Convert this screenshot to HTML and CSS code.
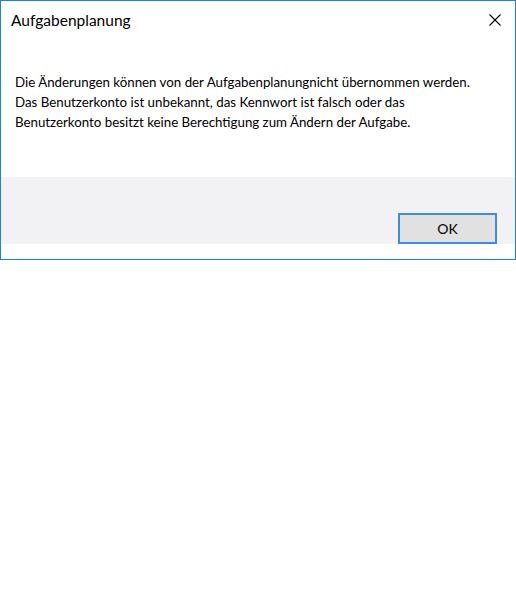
FILE: index.html
```html
<!DOCTYPE html>
<html lang="de">
<head>
<meta charset="utf-8">
<link rel="stylesheet" href="styles.css">
</head>
<body>
<div class="window">
  <div class="titlebar">
    <span class="title">Aufgabenplanung</span>
    <span class="close">
      <svg width="12" height="12" viewBox="0 0 12 12"><path d="M0.5 0.5 L11.5 11.5 M11.5 0.5 L0.5 11.5" stroke="#000" stroke-width="1.1" fill="none"/></svg>
    </span>
  </div>
  <div class="content">
    <p class="message">Die Änderungen können von der Aufgabenplanungnicht übernommen werden.<br>Das Benutzerkonto ist unbekannt, das Kennwort ist falsch oder das<br>Benutzerkonto besitzt keine Berechtigung zum Ändern der Aufgabe.</p>
  </div>
  <div class="footer">
    <button class="ok">OK</button>
  </div>
</div>
</body>
</html>
```
FILE: styles.css
```css
html, body {
  margin: 0;
  padding: 0;
  background: #ffffff;
}
.window {
  box-sizing: border-box;
  width: 516px;
  height: 260px;
  border: 1px solid #1c84d6;
  background: #ffffff;
  display: flex;
  flex-direction: column;
  font-family: Lato, "Noto Sans", sans-serif;
  color: #000;
}
.titlebar {
  height: 37px;
  display: flex;
  align-items: center;
  justify-content: space-between;
  padding: 0 14px 0 10px;
  box-sizing: border-box;
}
.title {
  font-size: 15.5px;
}
.close {
  display: flex;
  width: 12px;
  height: 12px;
}
.content {
  height: 139px;
  padding: 34px 0 0 14px;
  box-sizing: border-box;
}
.message {
  margin: 0;
  font-size: 13.3px;
  line-height: 20px;
  white-space: nowrap;
}
.footer {
  height: 67px;
  background: #f2f1f3;
  display: flex;
  justify-content: flex-end;
  align-items: flex-end;
  padding-right: 18px;
}
.ok {
  width: 99px;
  height: 31px;
  box-sizing: border-box;
  border: 2px solid #3a8ee0;
  background: #e1e1e1;
  font-family: Lato, "Noto Sans", sans-serif;
  font-size: 14px;
  color: #000;
  padding: 0;
}
```
